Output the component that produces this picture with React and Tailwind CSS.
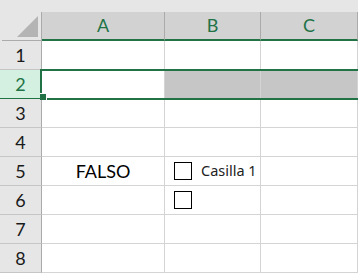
import React from "react";

const GREEN = "#217346";

const cols = [
  { name: "A", w: "w-[123px]" },
  { name: "B", w: "w-[96px]" },
  { name: "C", w: "w-[97px]" },
];

const Checkbox = () => (
  <div className="w-[18px] h-[18px] border border-black bg-white shrink-0" />
);

const Cell = ({ w, className = "", children }) => (
  <div
    className={`${w} h-full shrink-0 border-r border-[#d4d4d4] flex items-center ${className}`}
  >
    {children}
  </div>
);

export default function App() {
  const rows = [1, 2, 3, 4, 5, 6, 7, 8];

  return (
    <div
      className="w-[358px] h-[274px] bg-white overflow-hidden relative"
      style={{ fontFamily: "Lato, 'Liberation Sans', sans-serif" }}
    >
      {/* top band */}
      <div className="h-[12px] bg-[#e6e6e6]" />

      {/* column headers */}
      <div className="flex h-[29px]">
        <div className="w-[42px] h-full shrink-0 bg-[#e6e6e6] border-r border-[#ababab] relative">
          <div className="absolute left-[2px] right-0 bottom-0 h-px bg-[#ababab]" />
          <svg
            className="absolute left-[17px] top-[4px]"
            width="21"
            height="21"
            viewBox="0 0 21 21"
          >
            <polygon points="21,0 21,21 0,21" fill="#b4b4b4" />
          </svg>
        </div>
        {cols.map((c) => (
          <div
            key={c.name}
            className={`${c.w} h-full shrink-0 bg-[#d2d2d2] border-r border-[#ababab] border-b-2 border-b-[#217346] flex items-center justify-center text-[18px] text-[#217346]`}
          >
            {c.name}
          </div>
        ))}
        <div className="flex-1 h-full bg-[#d2d2d2] border-b-2 border-b-[#217346]" />
      </div>

      {/* rows */}
      {rows.map((r) => {
        const sel = r === 2;
        return (
          <div key={r} className="flex h-[29px]">
            <div
              className={`w-[42px] h-full shrink-0 border-r border-[#ababab] border-b flex items-center justify-center text-[18px] ${
                sel
                  ? "bg-[#d3f0e0] text-[#217346] border-b-[#217346]"
                  : "bg-[#e6e6e6] text-[#1a1a1a] border-b-[#c6c6c6]"
              }`}
            >
              {r}
            </div>
            <div className="flex flex-1 border-b border-[#d4d4d4]">
              <Cell w="w-[123px]" className="justify-center text-[18px] text-black">
                {r === 5 ? "FALSO" : null}
              </Cell>
              <Cell
                w="w-[96px]"
                className={`pl-[9px] gap-[9px] ${sel ? "bg-[#c6c6c6]" : ""}`}
              >
                {(r === 5 || r === 6) && <Checkbox />}
                {r === 5 && (
                  <span
                    className="text-[14.5px] text-[#222]"
                    style={{ fontFamily: "'Noto Sans', 'Open Sans', sans-serif" }}
                  >
                    Casilla 1
                  </span>
                )}
              </Cell>
              <Cell w="w-[97px]" className={sel ? "bg-[#c6c6c6]" : ""} />
              <div className={`flex-1 h-full ${sel ? "bg-[#c6c6c6]" : ""}`} />
            </div>
          </div>
        );
      })}

      {/* selection outline A2:C2 */}
      <div
        className="absolute left-[40px] right-0 top-[69px] h-[31px] border-2 border-r-0 pointer-events-none"
        style={{ borderColor: GREEN }}
      />
      <div className="absolute left-[40px] top-[93px] w-[7px] h-[7px] bg-[#217346] border-r border-t border-white" />
    </div>
  );
}
